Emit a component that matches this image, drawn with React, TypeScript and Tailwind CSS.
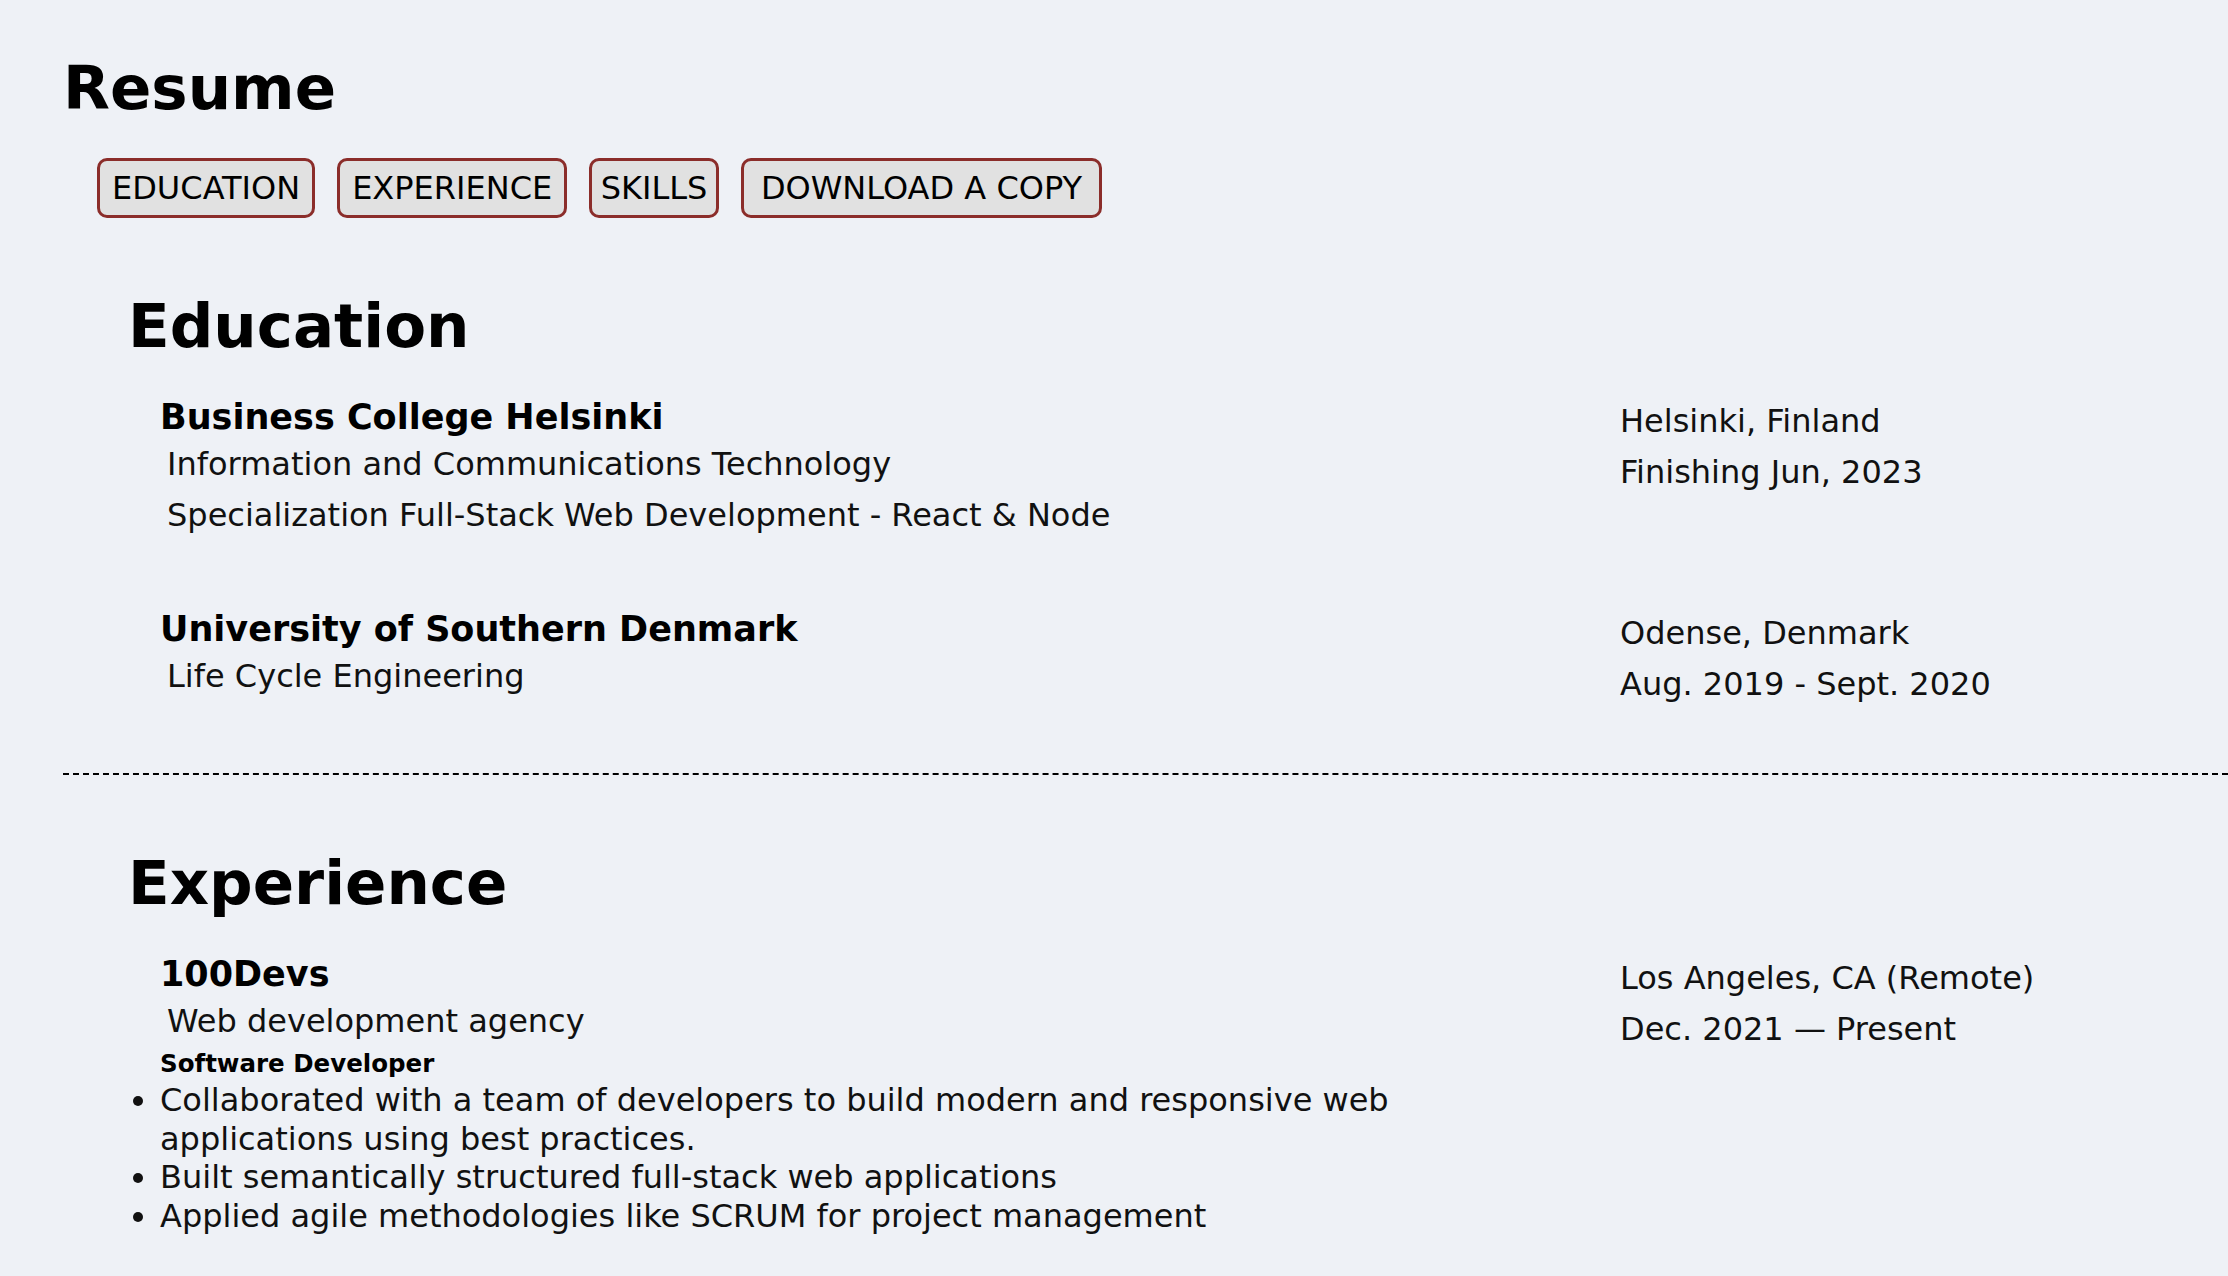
import React from 'react'

type Entry = {
  title: string
  lines: string[]
  place: string
  dates: string
  role?: string
  bullets?: string[]
}

const education: Entry[] = [
  {
    title: 'Business College Helsinki',
    lines: ['Information and Communications Technology', 'Specialization Full-Stack Web Development - React & Node'],
    place: 'Helsinki, Finland',
    dates: 'Finishing Jun, 2023',
  },
  {
    title: 'University of Southern Denmark',
    lines: ['Life Cycle Engineering'],
    place: 'Odense, Denmark',
    dates: 'Aug. 2019 - Sept. 2020',
  },
]

const experience: Entry[] = [
  {
    title: '100Devs',
    lines: ['Web development agency'],
    place: 'Los Angeles, CA (Remote)',
    dates: 'Dec. 2021 — Present',
    role: 'Software Developer',
    bullets: [
      'Collaborated with a team of developers to build modern and responsive web applications using best practices.',
      'Built semantically structured full-stack web applications',
      'Applied agile methodologies like SCRUM for project management',
    ],
  },
]

// padding per button so widths line up with the original font
const navItems = [
  { label: 'Education', pad: 'px-[12px]' },
  { label: 'Experience', pad: 'px-[12px]' },
  { label: 'Skills', pad: 'px-[8.5px]' },
  { label: 'Download a copy', pad: 'px-[17px]' },
]

function EntryRow({ entry }: { entry: Entry }) {
  return (
    <div className="grid grid-cols-[1460px_1fr] items-start">
      <div>
        <h3 className="text-[35px] font-bold leading-[43.7px]">{entry.title}</h3>
        {entry.lines.map(l => (
          <p key={l} className="pl-[7px] text-[32px] leading-[51px] text-[#111]">{l}</p>
        ))}
        {entry.role && <p className="text-[24.5px] font-bold leading-[34px]">{entry.role}</p>}
        {entry.bullets && (
          <ul className="max-w-[1320px] list-disc text-[32px] leading-[38.5px] text-[#111]">
            {entry.bullets.map(b => (
              <li key={b}>{b}</li>
            ))}
          </ul>
        )}
      </div>
      <div className="text-[32px] leading-[51px] text-[#111]">
        <p>{entry.place}</p>
        <p>{entry.dates}</p>
      </div>
    </div>
  )
}

function Section({ title, entries }: { title: string; entries: Entry[] }) {
  return (
    <section className="pl-[65px]">
      <h2 className="mt-[78px] text-[61px] font-bold leading-[60px]">{title}</h2>
      <div className="mt-[39.5px] flex flex-col gap-[66.5px] pl-[32px]">
        {entries.map(e => (
          <EntryRow key={e.title} entry={e} />
        ))}
      </div>
    </section>
  )
}

export default function App() {
  return (
    <div className="min-h-screen bg-[#eef1f6] pt-[58px] pb-20 pl-[63px] font-['DejaVu_Sans',sans-serif] text-black">
      <h1 className="text-[61px] font-bold leading-[60px]">Resume</h1>
      <nav className="mt-[40px] ml-[34px] flex gap-[22px]">
        {navItems.map(item => (
          <button
            key={item.label}
            className={`flex h-[60px] items-center rounded-[10px] border-[3px] border-[#8b2d2a] bg-[#e1e1e1] text-[32px] leading-[38px] uppercase ${item.pad}`}
          >
            {item.label}
          </button>
        ))}
      </nav>

      <Section title="Education" entries={education} />

      <div className="mt-[63.5px] border-t-2 border-dashed border-black" />

      <Section title="Experience" entries={experience} />
    </div>
  )
}
